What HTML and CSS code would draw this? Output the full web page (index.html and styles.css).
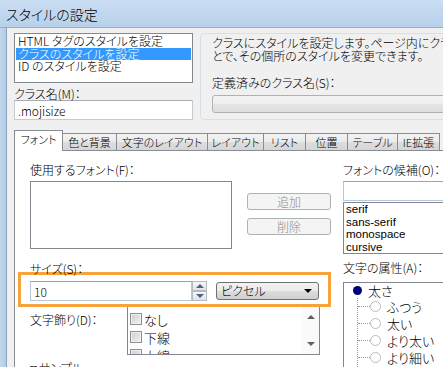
FILE: index.html
```html
<!DOCTYPE html>
<html lang="ja">

<head>
    <title>スタイルの設定</title>

    <meta http-equiv="Content-Type" content="text/html;charset=UTF-8">
    <meta name="viewport" content="width=device-width, initial-scale=1.0">

    <link rel="stylesheet" href="styles.css">
</head>

<body>
    <div class="window">
        <div class="titlebar">スタイルの設定</div>
        <div class="frame">
            <div class="frame-edge"></div>
            <div class="dialog">
                <div class="top">
                    <div class="target">
                        <ul class="listbox target-list">
                            <li>HTML タグのスタイルを設定</li>
                            <li class="selected">クラスのスタイルを設定</li>
                            <li>ID のスタイルを設定</li>
                        </ul>
                        <label class="label class-label" for="classname">クラス名(M)：</label>
                        <input class="textbox" id="classname" type="text" value=".mojisize">
                    </div>
                    <div class="groupbox">
                        <p class="desc">クラスにスタイルを設定します。ページ内にクラスを指定するこ<br>とで、その個所のスタイルを変更できます。</p>
                        <div class="label defined-label">定義済みのクラス名(S)：</div>
                        <div class="combo combo--disabled"></div>
                    </div>
                </div>

                <div class="tabs">
                    <div class="tab tab--active">フォント</div>
                    <div class="tab">色と背景</div>
                    <div class="tab">文字のレイアウト</div>
                    <div class="tab">レイアウト</div>
                    <div class="tab">リスト</div>
                    <div class="tab">位置</div>
                    <div class="tab">テーブル</div>
                    <div class="tab">IE拡張</div>
                </div>

                <div class="panel">
                    <div class="col-left">
                        <div class="label">使用するフォント(F)：</div>
                        <div class="font-pick">
                            <div class="listbox font-list"></div>
                            <div class="buttons">
                                <button class="btn" disabled>追加</button>
                                <button class="btn" disabled>削除</button>
                            </div>
                        </div>

                        <div class="label size-label">サイズ(S)：</div>
                        <div class="size-box">
                            <input class="textbox size-input" type="text" value="10">
                            <div class="spin">
                                <span class="spin-btn spin-btn--up"></span>
                                <span class="spin-btn spin-btn--down"></span>
                            </div>
                            <div class="combo unit-combo">ピクセル<span class="combo-arrow"></span></div>
                        </div>

                        <div class="deco-row">
                            <div class="label deco-label">文字飾り(D)：</div>
                            <div class="deco-list">
                                <ul class="deco-items">
                                    <li><span class="checkbox"></span>なし</li>
                                    <li><span class="checkbox"></span>下線</li>
                                    <li><span class="checkbox"></span>上線</li>
                                    <li><span class="checkbox"></span>取り消し線</li>
                                </ul>
                                <div class="scrollbar">
                                    <span class="scroll-arrow scroll-arrow--up"></span>
                                    <span class="scroll-arrow scroll-arrow--down"></span>
                                </div>
                            </div>
                        </div>

                        <div class="sample"><span>サンプル</span></div>
                    </div>

                    <div class="col-right">
                        <div class="label">フォントの候補(O)：</div>
                        <input class="textbox candidate-input" type="text" value="">
                        <ul class="listbox candidate-list">
                            <li>serif</li>
                            <li>sans-serif</li>
                            <li>monospace</li>
                            <li>cursive</li>
                        </ul>

                        <div class="label attr-label">文字の属性(A)：</div>
                        <div class="tree">
                            <div class="tree-root"><span class="tree-bullet"></span>太さ</div>
                            <ul class="tree-children">
                                <li><span class="radio"></span>ふつう</li>
                                <li><span class="radio"></span>太い</li>
                                <li><span class="radio"></span>より太い</li>
                                <li><span class="radio"></span>より細い</li>
                                <li><span class="radio"></span>数値(100)</li>
                            </ul>
                        </div>
                    </div>
                </div>
            </div>
        </div>
    </div>
</body>

</html>
```

FILE: styles.css
```css
* {
    box-sizing: border-box;
}

body {
    margin: 0;
    overflow: hidden;
    font-family: "Noto Sans CJK JP", "Liberation Sans", sans-serif;
    font-size: 12px;
    font-weight: 300;
    font-feature-settings: "palt";
    color: #000;
    background: #f0f0f0;
}

ul {
    list-style: none;
    margin: 0;
    padding: 0;
}

p {
    margin: 0;
}

.window {
    width: 620px;
    height: 367px;
}

.titlebar {
    height: 28px;
    padding: 5px 0 0 6px;
    font-size: 14px;
    line-height: 18px;
    background: linear-gradient(#cadef3, #b8d0ea);
    border-bottom: 1px solid #98adc6;
}

.frame {
    display: flex;
    height: 339px;
}

.frame-edge {
    width: 7px;
    background: linear-gradient(to right, #c3d8ef 0, #b3cbe6 6px, #8fa3bb 6px);
}

.dialog {
    flex: 1;
    padding: 5px 0 0 7px;
    background: #f0f0f0;
}

/* top area */

.top {
    display: flex;
    gap: 7px;
}

.target {
    width: 179px;
}

.listbox {
    background: #fff;
    border: 1px solid #828790;
}

.target-list {
    height: 50px;
    padding: 1px;
}

.target-list li {
    height: 12.5px;
    line-height: 12.5px;
    padding-left: 2px;
    white-space: nowrap;
}

.target-list .selected {
    background: #3399ff;
    color: #fff;
}

.label {
    display: block;
    line-height: 15px;
    white-space: nowrap;
}

.class-label {
    margin-top: 4px;
    line-height: 13px;
}

.textbox {
    display: block;
    width: 100%;
    height: 20px;
    margin: 0;
    padding: 0 3px;
    border: 1px solid #c7cbd1;
    border-top-color: #abadb3;
    background: #fff;
    font: inherit;
    color: #000;
    outline: none;
}

.groupbox {
    flex: 1;
    height: 87px;
    padding: 3px 0 0 11px;
    border: 1px solid #d5dfe5;
    border-radius: 4px;
}

.desc {
    line-height: 12.5px;
    white-space: nowrap;
}

.defined-label {
    margin-top: 14px;
    line-height: 13px;
}

.combo {
    height: 18px;
    border: 1px solid #707070;
    border-radius: 3px;
    background: linear-gradient(#f2f2f2 0, #ebebeb 50%, #dddddd 50%, #cfcfcf 100%);
}

.combo--disabled {
    margin-top: 6px;
    border-color: #adb2b5;
    background: linear-gradient(#f4f4f4 0, #efefef 50%, #e5e5e5 50%, #dedede 100%);
}

/* tabs */

.tabs {
    display: flex;
    align-items: flex-end;
    margin-top: 10px;
}

.tab {
    height: 17px;
    margin-right: -1px;
    border: 1px solid #898c95;
    border-bottom: none;
    background: linear-gradient(#f3f3f3 0, #ebebeb 50%, #dddddd 50%, #d6d6d6 100%);
    font-size: 11px;
    line-height: 16px;
    text-align: center;
    white-space: nowrap;
}

.tab:nth-child(1) { width: 49px; }
.tab:nth-child(2) { width: 55px; }
.tab:nth-child(3) { width: 92px; }
.tab:nth-child(4) { width: 57px; }
.tab:nth-child(5) { width: 43px; }
.tab:nth-child(6) { width: 43px; }
.tab:nth-child(7) { width: 51px; }
.tab:nth-child(8) { width: 43px; }

.tab--active {
    position: relative;
    z-index: 1;
    height: 21px;
    margin-bottom: -1px;
    background: #fff;
    line-height: 17px;
}

.panel {
    display: grid;
    grid-template-columns: 301px 140px;
    column-gap: 12px;
    align-items: start;
    height: 230px;
    padding: 11px 0 0 15px;
    border: 1px solid #898c95;
    background: #fff;
}

/* left column */

.font-pick {
    display: flex;
    margin-top: 4px;
}

.font-list {
    width: 202px;
    height: 68px;
}

.buttons {
    display: flex;
    flex-direction: column;
    gap: 8px;
    margin-left: 15px;
    padding-top: 12px;
}

.btn {
    width: 84px;
    height: 17px;
    padding: 0;
    border: 1px solid #adb2b5;
    border-radius: 3px;
    background: #f4f4f4;
    color: #8d8d8d;
    font: inherit;
    line-height: 15px;
}

.size-label {
    margin-top: 13px;
    margin-bottom: -3px;
    line-height: 13px;
}

.size-box {
    display: flex;
    align-items: center;
    width: 313px;
    margin-left: -12px;
    padding: 6px 9px 3px;
    border: 3px solid #f7a23b;
}

.size-input {
    width: 162px;
    border-color: #b5c8de;
    border-top-color: #8ea6c6;
}

.spin {
    display: flex;
    flex-direction: column;
    width: 15px;
    height: 20px;
}

.spin-btn {
    position: relative;
    height: 10px;
    border: 1px solid #b6b9be;
    background: linear-gradient(#f6f6f6, #e1e3e6);
}

.spin-btn::after {
    content: "";
    position: absolute;
    left: 3px;
    top: 2px;
    border-left: 4px solid transparent;
    border-right: 4px solid transparent;
}

.spin-btn--up::after {
    border-bottom: 4px solid #4e6188;
}

.spin-btn--down::after {
    border-top: 4px solid #4e6188;
}

.unit-combo {
    position: relative;
    width: 103px;
    margin-left: 9px;
    padding-left: 4px;
    line-height: 16px;
}

.combo-arrow {
    position: absolute;
    right: 6px;
    top: 6px;
    border-left: 4px solid transparent;
    border-right: 4px solid transparent;
    border-top: 4px solid #000;
}

.deco-row {
    display: flex;
}

.deco-label {
    width: 97px;
    padding-top: 5px;
}

.deco-list {
    display: flex;
    width: 193px;
    height: 48px;
    border: 1px solid #828790;
    border-top: none;
    overflow: hidden;
}

.deco-items {
    flex: 1;
    padding: 3px 0 0 2px;
}

.deco-items li {
    display: flex;
    align-items: center;
    height: 18px;
    font-size: 13px;
}

.checkbox {
    width: 12px;
    height: 12px;
    margin-right: 2px;
    border: 1px solid #8e8f8f;
    background: linear-gradient(135deg, #c9ccd1, #f4f4f4);
    box-shadow: inset 0 0 0 1px #f1f1f1;
}

.scrollbar {
    position: relative;
    width: 17px;
    background: #fafafa;
}

.scroll-arrow {
    position: absolute;
    left: 5px;
    border-left: 4px solid transparent;
    border-right: 4px solid transparent;
}

.scroll-arrow--up {
    top: 8px;
    border-bottom: 4px solid #606060;
}

.scroll-arrow--down {
    top: 35px;
    border-top: 4px solid #606060;
}

.sample {
    display: flex;
    align-items: flex-start;
    margin-top: 5px;
    line-height: 15px;
}

.sample::before {
    content: "";
    width: 7px;
    margin: 6px 2px 0 0;
    border-top: 1px solid #555;
}

/* right column */

.candidate-input {
    margin-top: 4px;
    border-color: #b5c8de;
    border-top-color: #8ea6c6;
}

.candidate-list {
    height: 52px;
    margin-top: 1px;
    padding: 0 2px;
    font-family: "Liberation Sans", sans-serif;
    font-size: 11.5px;
    font-weight: 400;
}

.candidate-list li {
    height: 12.5px;
    line-height: 12.5px;
}

.attr-label {
    margin-top: 7px;
    line-height: 13px;
}

.tree {
    height: 110px;
    margin-top: 8px;
    padding: 0 0 0 9px;
    border: 1px solid #828790;
    font-size: 13px;
    overflow: hidden;
}

.tree-root {
    display: flex;
    align-items: center;
    height: 15px;
}

.tree-bullet {
    width: 9px;
    height: 9px;
    margin-right: 6px;
    border-radius: 50%;
    background: #000080;
}

.tree-children {
    margin-left: 4px;
    padding-left: 12px;
    border-left: 1px dotted #9a9a9a;
}

.tree-children li {
    position: relative;
    display: flex;
    align-items: center;
    height: 17px;
    white-space: nowrap;
}

.tree-children li::before {
    content: "";
    position: absolute;
    left: -12px;
    top: 8px;
    width: 12px;
    border-top: 1px dotted #9a9a9a;
}

.radio {
    width: 11px;
    height: 11px;
    margin-right: 6px;
    border: 1px solid #bcbcbc;
    border-radius: 50%;
    background: #fff;
}
```
